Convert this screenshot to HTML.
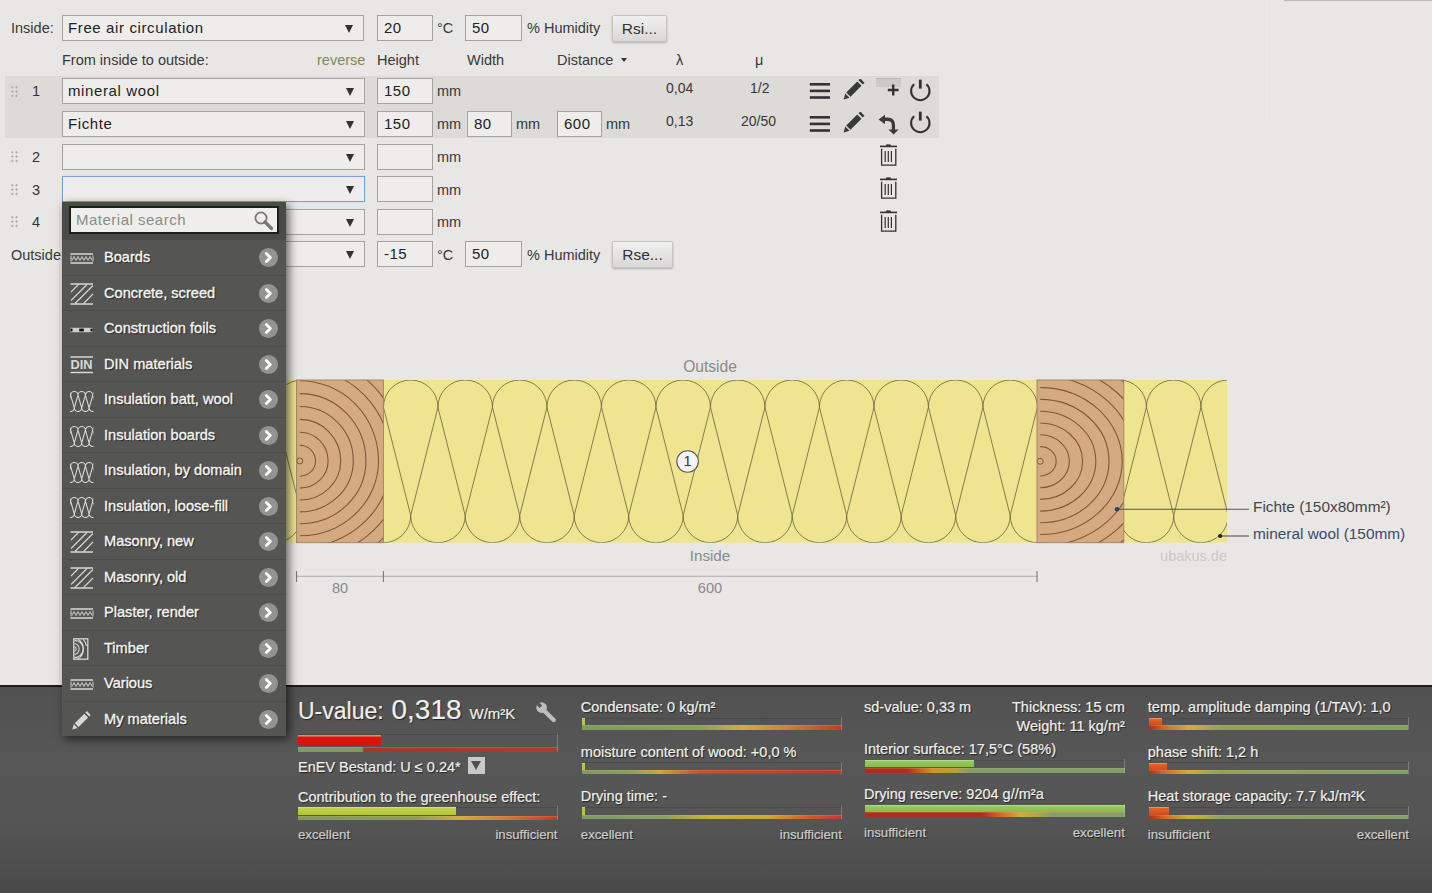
<!DOCTYPE html>
<html><head><meta charset="utf-8">
<style>
*{box-sizing:border-box;margin:0;padding:0}
html,body{width:1432px;height:893px;overflow:hidden}
body{position:relative;background:#e8e7e5;font-family:"Liberation Sans",sans-serif;color:#383838;font-size:14.5px}
.a{position:absolute;white-space:nowrap}
.sel{position:absolute;left:62px;width:303px;height:26px;border:1px solid #a4a4a2;background:#eeedeb;font-size:15px;letter-spacing:0.62px;color:#222;padding-left:5px;line-height:24px}
.sel .ar{position:absolute;right:10px;top:9px;width:0;height:0;border-left:4.5px solid transparent;border-right:4.5px solid transparent;border-top:8px solid #333}
.inp{position:absolute;height:26px;border:1px solid #a4a4a2;background:#eeedeb;font-size:15px;letter-spacing:0.5px;color:#222;padding-left:6px;line-height:24px}
.lbl{position:absolute;white-space:nowrap;line-height:18px}
.band{position:absolute;left:5px;top:76px;width:934px;height:62px;background:#dcdbd8}
.num{position:absolute;left:32px;font-size:14.5px;line-height:18px;color:#333}
.drag{position:absolute;left:10px;width:8.8px;height:13.2px;background-image:radial-gradient(circle,#a8a8a8 0.85px,transparent 1.15px);background-size:4.4px 4.4px}
.btn{position:absolute;height:27px;border:1px solid #c4c4c2;border-radius:2px;background:linear-gradient(#f0f0ee,#d9d8d6);box-shadow:0 1px 2px rgba(0,0,0,0.25);font-size:15.5px;color:#333;text-align:center;line-height:25px}

.pt{position:absolute;white-space:nowrap;line-height:20px;text-shadow:1px 1px 1px #222;-webkit-text-stroke-width:0.2px}
.mit{position:absolute;left:0;width:225px;height:35.5px;border-top:1px solid #4d4d4b}
.mi{position:absolute;left:8px}
.mt{position:absolute;left:42px;top:8px;font-size:14.6px;line-height:18px;color:#f4f4f2;-webkit-text-stroke:0.35px #f4f4f2;text-shadow:1px 1px 1px #1a1a1a;white-space:nowrap}
.mc{position:absolute;left:196.5px;top:8px;width:19px;height:19px;border-radius:50%;background:#939391}
.mc svg{position:absolute;left:0;top:0}
</style></head>
<body>
<!-- diagram -->
<svg class="a" style="left:0;top:0" width="1432" height="685" viewBox="0 0 1432 685">
<defs><clipPath id="insclip"><rect x="180.0" y="380.0" width="1047.0" height="162.70000000000005"/></clipPath></defs>
<rect x="180.0" y="380.0" width="1047.0" height="162.70000000000005" fill="#efe590"/>
<g clip-path="url(#insclip)"><path d="M110.95 407.25 A27.25 27.25 0 0 1 165.45 407.25 M138.20 515.45 A27.25 27.25 0 0 0 192.70 515.45 M110.95 407.25 L83.70 515.45 M110.95 407.25 L138.20 515.45 M165.45 407.25 A27.25 27.25 0 0 1 219.95 407.25 M192.70 515.45 A27.25 27.25 0 0 0 247.20 515.45 M165.45 407.25 L138.20 515.45 M165.45 407.25 L192.70 515.45 M219.95 407.25 A27.25 27.25 0 0 1 274.45 407.25 M247.20 515.45 A27.25 27.25 0 0 0 301.70 515.45 M219.95 407.25 L192.70 515.45 M219.95 407.25 L247.20 515.45 M274.45 407.25 A27.25 27.25 0 0 1 328.95 407.25 M301.70 515.45 A27.25 27.25 0 0 0 356.20 515.45 M274.45 407.25 L247.20 515.45 M274.45 407.25 L301.70 515.45 M328.95 407.25 A27.25 27.25 0 0 1 383.45 407.25 M356.20 515.45 A27.25 27.25 0 0 0 410.70 515.45 M328.95 407.25 L301.70 515.45 M328.95 407.25 L356.20 515.45 M383.45 407.25 A27.25 27.25 0 0 1 437.95 407.25 M410.70 515.45 A27.25 27.25 0 0 0 465.20 515.45 M383.45 407.25 L356.20 515.45 M383.45 407.25 L410.70 515.45 M437.95 407.25 A27.25 27.25 0 0 1 492.45 407.25 M465.20 515.45 A27.25 27.25 0 0 0 519.70 515.45 M437.95 407.25 L410.70 515.45 M437.95 407.25 L465.20 515.45 M492.45 407.25 A27.25 27.25 0 0 1 546.95 407.25 M519.70 515.45 A27.25 27.25 0 0 0 574.20 515.45 M492.45 407.25 L465.20 515.45 M492.45 407.25 L519.70 515.45 M546.95 407.25 A27.25 27.25 0 0 1 601.45 407.25 M574.20 515.45 A27.25 27.25 0 0 0 628.70 515.45 M546.95 407.25 L519.70 515.45 M546.95 407.25 L574.20 515.45 M601.45 407.25 A27.25 27.25 0 0 1 655.95 407.25 M628.70 515.45 A27.25 27.25 0 0 0 683.20 515.45 M601.45 407.25 L574.20 515.45 M601.45 407.25 L628.70 515.45 M655.95 407.25 A27.25 27.25 0 0 1 710.45 407.25 M683.20 515.45 A27.25 27.25 0 0 0 737.70 515.45 M655.95 407.25 L628.70 515.45 M655.95 407.25 L683.20 515.45 M710.45 407.25 A27.25 27.25 0 0 1 764.95 407.25 M737.70 515.45 A27.25 27.25 0 0 0 792.20 515.45 M710.45 407.25 L683.20 515.45 M710.45 407.25 L737.70 515.45 M764.95 407.25 A27.25 27.25 0 0 1 819.45 407.25 M792.20 515.45 A27.25 27.25 0 0 0 846.70 515.45 M764.95 407.25 L737.70 515.45 M764.95 407.25 L792.20 515.45 M819.45 407.25 A27.25 27.25 0 0 1 873.95 407.25 M846.70 515.45 A27.25 27.25 0 0 0 901.20 515.45 M819.45 407.25 L792.20 515.45 M819.45 407.25 L846.70 515.45 M873.95 407.25 A27.25 27.25 0 0 1 928.45 407.25 M901.20 515.45 A27.25 27.25 0 0 0 955.70 515.45 M873.95 407.25 L846.70 515.45 M873.95 407.25 L901.20 515.45 M928.45 407.25 A27.25 27.25 0 0 1 982.95 407.25 M955.70 515.45 A27.25 27.25 0 0 0 1010.20 515.45 M928.45 407.25 L901.20 515.45 M928.45 407.25 L955.70 515.45 M982.95 407.25 A27.25 27.25 0 0 1 1037.45 407.25 M1010.20 515.45 A27.25 27.25 0 0 0 1064.70 515.45 M982.95 407.25 L955.70 515.45 M982.95 407.25 L1010.20 515.45 M1037.45 407.25 A27.25 27.25 0 0 1 1091.95 407.25 M1064.70 515.45 A27.25 27.25 0 0 0 1119.20 515.45 M1037.45 407.25 L1010.20 515.45 M1037.45 407.25 L1064.70 515.45 M1091.95 407.25 A27.25 27.25 0 0 1 1146.45 407.25 M1119.20 515.45 A27.25 27.25 0 0 0 1173.70 515.45 M1091.95 407.25 L1064.70 515.45 M1091.95 407.25 L1119.20 515.45 M1146.45 407.25 A27.25 27.25 0 0 1 1200.95 407.25 M1173.70 515.45 A27.25 27.25 0 0 0 1228.20 515.45 M1146.45 407.25 L1119.20 515.45 M1146.45 407.25 L1173.70 515.45 M1200.95 407.25 A27.25 27.25 0 0 1 1255.45 407.25 M1228.20 515.45 A27.25 27.25 0 0 0 1282.70 515.45 M1200.95 407.25 L1173.70 515.45 M1200.95 407.25 L1228.20 515.45 M1255.45 407.25 A27.25 27.25 0 0 1 1309.95 407.25 M1282.70 515.45 A27.25 27.25 0 0 0 1337.20 515.45 M1255.45 407.25 L1228.20 515.45 M1255.45 407.25 L1282.70 515.45" fill="none" stroke="#6e6a45" stroke-width="0.85"/></g>
<clipPath id="t1"><rect x="296.6" y="380.0" width="86.8" height="162.70000000000005"/></clipPath>
<rect x="296.6" y="380.0" width="86.8" height="162.70000000000005" fill="#d6aa81"/>
<g clip-path="url(#t1)"><path d="M299.80 445.20 A15.70 15.70 0 0 1 315.50 460.90 A15.70 15.30 0 0 1 299.80 476.20 M299.80 432.30 A28.30 28.60 0 0 1 328.10 460.90 A28.30 27.20 0 0 1 299.80 488.10 M299.80 419.40 A40.90 41.50 0 0 1 340.70 460.90 A40.90 39.10 0 0 1 299.80 500.00 M299.80 406.50 A53.50 54.40 0 0 1 353.30 460.90 A53.50 51.00 0 0 1 299.80 511.90 M299.80 393.60 A66.10 67.30 0 0 1 365.90 460.90 A66.10 62.90 0 0 1 299.80 523.80 M299.80 380.70 A78.70 80.20 0 0 1 378.50 460.90 A78.70 74.80 0 0 1 299.80 535.70 M299.80 367.80 A91.30 93.10 0 0 1 391.10 460.90 A91.30 86.70 0 0 1 299.80 547.60 M299.80 354.90 A103.90 106.00 0 0 1 403.70 460.90 A103.90 98.60 0 0 1 299.80 559.50 M299.80 342.00 A116.50 118.90 0 0 1 416.30 460.90 A116.50 110.50 0 0 1 299.80 571.40" fill="none" stroke="#7d5a3a" stroke-width="1.1"/></g>
<circle cx="299.80" cy="460.9" r="3" fill="none" stroke="#7d5a3a" stroke-width="1"/>
<rect x="296.6" y="380.0" width="86.8" height="162.70000000000005" fill="none" stroke="#9b8466" stroke-width="0.9"/>
<clipPath id="t2"><rect x="1037.0" y="380.0" width="86.8" height="162.70000000000005"/></clipPath>
<rect x="1037.0" y="380.0" width="86.8" height="162.70000000000005" fill="#d6aa81"/>
<g clip-path="url(#t2)"><path d="M1040.20 446.60 A16.00 14.70 0 0 1 1056.20 461.30 A16.00 14.70 0 0 1 1040.20 476.00 M1040.20 434.80 A29.20 26.50 0 0 1 1069.40 461.30 A29.20 26.40 0 0 1 1040.20 487.70 M1040.20 423.00 A42.40 38.30 0 0 1 1082.60 461.30 A42.40 38.10 0 0 1 1040.20 499.40 M1040.20 411.20 A55.60 50.10 0 0 1 1095.80 461.30 A55.60 49.80 0 0 1 1040.20 511.10 M1040.20 399.40 A68.80 61.90 0 0 1 1109.00 461.30 A68.80 61.50 0 0 1 1040.20 522.80 M1040.20 387.60 A82.00 73.70 0 0 1 1122.20 461.30 A82.00 73.20 0 0 1 1040.20 534.50 M1040.20 375.80 A95.20 85.50 0 0 1 1135.40 461.30 A95.20 84.90 0 0 1 1040.20 546.20 M1040.20 364.00 A108.40 97.30 0 0 1 1148.60 461.30 A108.40 96.60 0 0 1 1040.20 557.90 M1040.20 352.20 A121.60 109.10 0 0 1 1161.80 461.30 A121.60 108.30 0 0 1 1040.20 569.60" fill="none" stroke="#7d5a3a" stroke-width="1.1"/></g>
<circle cx="1040.20" cy="461.3" r="3" fill="none" stroke="#7d5a3a" stroke-width="1"/>
<rect x="1037.0" y="380.0" width="86.8" height="162.70000000000005" fill="none" stroke="#9b8466" stroke-width="0.9"/>
<circle cx="687.6" cy="461.5" r="10.8" fill="#f4f4f2" stroke="#555" stroke-width="1.1"/>
<text x="687.6" y="466.3" font-family="Liberation Sans" font-size="14.5" fill="#333" text-anchor="middle">1</text>
<text x="710" y="372.4" font-family="Liberation Sans" font-size="15.6" fill="#8a8a8a" text-anchor="middle">Outside</text>
<text x="710" y="561.4" font-family="Liberation Sans" font-size="15.2" fill="#8a8a8a" text-anchor="middle">Inside</text>
<text x="1227" y="560.6" font-family="Liberation Sans" font-size="14.5" fill="#c9c9c8" text-anchor="end">ubakus.de</text>
<path d="M296.5 576.3 H1037" stroke="#ababab" stroke-width="1.1"/>
<path d="M296.5 571 V582 M383.4 571 V582 M1037 571 V582" stroke="#7a7a7a" stroke-width="1.1"/>
<text x="340" y="593" font-family="Liberation Sans" font-size="14.6" fill="#8a8a8a" text-anchor="middle">80</text>
<text x="710" y="593" font-family="Liberation Sans" font-size="14.6" fill="#8a8a8a" text-anchor="middle">600</text>
<path d="M1117 509.2 H1249" stroke="#555" stroke-width="1.1"/>
<circle cx="1117" cy="509.2" r="2.3" fill="#24476a"/>
<path d="M1220.2 536 H1249" stroke="#555" stroke-width="1.1"/>
<circle cx="1220.2" cy="536" r="2.1" fill="#222"/>
<text x="1253" y="511.5" font-family="Liberation Sans" font-size="15.4" fill="#454545">Fichte (150x80mm²)</text>
<text x="1253" y="538.5" font-family="Liberation Sans" font-size="15.4" fill="#3e4a68">mineral wool (150mm)</text>
</svg>
<!-- /diagram -->



<!-- top row -->
<div class="lbl" style="left:11px;top:19px">Inside:</div>
<div class="sel" style="top:15px;width:302px">Free air circulation<span class="ar"></span></div>
<div class="inp" style="left:377px;top:15px;width:56px">20</div>
<div class="lbl" style="left:437px;top:19px">°C</div>
<div class="inp" style="left:465px;top:15px;width:57px">50</div>
<div class="lbl" style="left:527px;top:19px">% Humidity</div>
<div class="btn" style="left:612px;top:15px;width:55px">Rsi...</div>

<div class="lbl" style="left:62px;top:51px">From inside to outside:</div>
<div class="lbl" style="left:317px;top:51px;color:#7d8a5a">reverse</div>
<div class="lbl" style="left:377px;top:51px">Height</div>
<div class="lbl" style="left:467px;top:51px">Width</div>
<div class="lbl" style="left:557px;top:51px">Distance</div>
<div class="a" style="left:621px;top:58px;border-left:3px solid transparent;border-right:3px solid transparent;border-top:4px solid #333"></div>
<div class="lbl" style="left:676px;top:51px">λ</div>
<div class="lbl" style="left:755px;top:51px">μ</div>

<div class="band"></div>
<div id="topline" class="a" style="left:1284px;top:0;width:148px;height:1px;background:#bdbcba"></div>
<div class="a" style="left:1269px;top:0;width:1px;height:125px;background:#e5e4e2"></div>

<!-- rows -->
<div class="drag" style="top:84.8px"></div><div class="num" style="top:82px">1</div>
<div class="sel" style="top:78px">mineral wool<span class="ar"></span></div>
<div class="inp" style="left:377px;top:78px;width:56px">150</div>
<div class="lbl" style="left:437px;top:82px">mm</div>
<div class="lbl" style="left:666px;top:79px;font-size:14px">0,04</div>
<div class="lbl" style="left:750px;top:79px;font-size:14px">1/2</div>

<div class="sel" style="top:111px">Fichte<span class="ar"></span></div>
<div class="inp" style="left:377px;top:111px;width:56px">150</div>
<div class="lbl" style="left:437px;top:115px">mm</div>
<div class="inp" style="left:467px;top:111px;width:45px">80</div>
<div class="lbl" style="left:516px;top:115px">mm</div>
<div class="inp" style="left:557px;top:111px;width:45px">600</div>
<div class="lbl" style="left:606px;top:115px">mm</div>
<div class="lbl" style="left:666px;top:112px;font-size:14px">0,13</div>
<div class="lbl" style="left:741px;top:112px;font-size:14px">20/50</div>

<div class="drag" style="top:150.2px"></div><div class="num" style="top:148px">2</div>
<div class="sel" style="top:144px"><span class="ar"></span></div>
<div class="inp" style="left:377px;top:144px;width:56px"></div>
<div class="lbl" style="left:437px;top:148px">mm</div>

<div class="drag" style="top:182.6px"></div><div class="num" style="top:181px">3</div>
<div class="sel" style="top:176px;border-color:#7b9fdc;box-shadow:0 0 1px #9ab8ea"><span class="ar"></span></div>
<div class="inp" style="left:377px;top:176px;width:56px"></div>
<div class="lbl" style="left:437px;top:181px">mm</div>

<div class="drag" style="top:215px"></div><div class="num" style="top:213px">4</div>
<div class="sel" style="top:209px"><span class="ar"></span></div>
<div class="inp" style="left:377px;top:209px;width:56px"></div>
<div class="lbl" style="left:437px;top:213px">mm</div>

<div class="lbl" style="left:11px;top:246px">Outside:</div>
<div class="sel" style="top:241px"><span class="ar"></span></div>
<div class="inp" style="left:377px;top:241px;width:56px">-15</div>
<div class="lbl" style="left:437px;top:246px">°C</div>
<div class="inp" style="left:465px;top:241px;width:57px">50</div>
<div class="lbl" style="left:527px;top:246px">% Humidity</div>
<div class="btn" style="left:612px;top:241px;width:61px">Rse...</div>

<!-- row icons -->
<svg class="a" style="left:809px;top:82px" width="22" height="18" viewBox="0 0 22 18"><rect x="0.8" y="1" width="20.2" height="2.6" fill="#333"/><rect x="0.8" y="7.6" width="20.2" height="2.6" fill="#333"/><rect x="0.8" y="14.2" width="20.2" height="2.6" fill="#333"/></svg>
<svg class="a" style="left:809px;top:115px" width="22" height="18" viewBox="0 0 22 18"><rect x="0.8" y="1" width="20.2" height="2.6" fill="#333"/><rect x="0.8" y="7.6" width="20.2" height="2.6" fill="#333"/><rect x="0.8" y="14.2" width="20.2" height="2.6" fill="#333"/></svg>
<svg class="a" style="left:842px;top:79px" width="24" height="22" viewBox="0 0 24 22"><path d="M1.6 20.4 L3.28 14.48 L7.52 18.72 Z" fill="#3a3a3a"/><path d="M4.28 13.48 L15.28 2.48 L19.52 6.72 L8.52 17.72 Z" fill="#3a3a3a"/><path d="M16.48 1.28 L18.28 -0.52 L22.52 3.72 L20.72 5.52 Z" fill="#3a3a3a"/></svg>
<svg class="a" style="left:842px;top:112px" width="24" height="22" viewBox="0 0 24 22"><path d="M1.6 20.4 L3.28 14.48 L7.52 18.72 Z" fill="#3a3a3a"/><path d="M4.28 13.48 L15.28 2.48 L19.52 6.72 L8.52 17.72 Z" fill="#3a3a3a"/><path d="M16.48 1.28 L18.28 -0.52 L22.52 3.72 L20.72 5.52 Z" fill="#3a3a3a"/></svg>
<div class="a" style="left:876px;top:78px;width:25px;height:8.5px;background:#cbcac8;border-top:1px solid #bdbcba"></div>
<svg class="a" style="left:886px;top:83px" width="14" height="14" viewBox="0 0 14 14"><rect x="0" y="0" width="14" height="14" fill="#dcdbd8" opacity="0"/><path d="M1.8 7 H12.6 M7.2 1.4 V12.6" stroke="#333" stroke-width="2.4"/></svg>
<svg class="a" style="left:908px;top:78px" width="26" height="26" viewBox="0 0 26 26"><path d="M6.14 6.16 A9.2 9.2 0 1 0 18.46 6.16" fill="none" stroke="#333" stroke-width="2.1"/><rect x="10.9" y="1.6" width="2.8" height="9" fill="#333"/></svg>
<svg class="a" style="left:908px;top:110px" width="26" height="26" viewBox="0 0 26 26"><path d="M6.14 6.16 A9.2 9.2 0 1 0 18.46 6.16" fill="none" stroke="#333" stroke-width="2.1"/><rect x="10.9" y="1.6" width="2.8" height="9" fill="#333"/></svg>
<svg class="a" style="left:876px;top:113px" width="26" height="24" viewBox="0 0 26 24"><path d="M2.6 6.6 L9 1.8 L9 4.6 L11.5 4.6 C16.8 4.6 19 8 19 12 L19 16.5 L22.6 16.5 L17.6 21.6 L12.4 16.5 L15.8 16.5 L15.8 12 C15.8 9.4 14.6 8 11.5 8 L9 8 L9 11.2 Z" fill="#3a3a3a"/></svg>
<svg class="a" style="left:878px;top:144px" width="22" height="24" viewBox="0 0 22 24">
<rect x="2" y="1.6" width="17" height="1.6" fill="#333"/><rect x="8.2" y="0.4" width="4.5" height="1.6" fill="#333"/>
<path d="M3.6 4.8 V21.2 H17.8 V4.8" fill="none" stroke="#333" stroke-width="1.3"/>
<path d="M7.2 7 V18 M10.3 7 V18 M13.4 7 V18" stroke="#333" stroke-width="1.2"/></svg><svg class="a" style="left:878px;top:177px" width="22" height="24" viewBox="0 0 22 24">
<rect x="2" y="1.6" width="17" height="1.6" fill="#333"/><rect x="8.2" y="0.4" width="4.5" height="1.6" fill="#333"/>
<path d="M3.6 4.8 V21.2 H17.8 V4.8" fill="none" stroke="#333" stroke-width="1.3"/>
<path d="M7.2 7 V18 M10.3 7 V18 M13.4 7 V18" stroke="#333" stroke-width="1.2"/></svg><svg class="a" style="left:878px;top:210px" width="22" height="24" viewBox="0 0 22 24">
<rect x="2" y="1.6" width="17" height="1.6" fill="#333"/><rect x="8.2" y="0.4" width="4.5" height="1.6" fill="#333"/>
<path d="M3.6 4.8 V21.2 H17.8 V4.8" fill="none" stroke="#333" stroke-width="1.3"/>
<path d="M7.2 7 V18 M10.3 7 V18 M13.4 7 V18" stroke="#333" stroke-width="1.2"/></svg>



<!-- panel -->
<div id="panel" class="a" style="left:0;top:685px;width:1432px;height:208px;background:linear-gradient(#515151 0%,#575757 35%,#555555 65%,#4a4a4a 100%);border-top:2px solid #1c1c1c"></div>
<div class="pt" style="left:298.0px;top:701.3px;font-size:23px;color:#efefed;">U-value:</div>
<div class="pt" style="left:391.5px;top:699.6px;font-size:28px;color:#efefed;">0,318</div>
<div class="pt" style="left:469.5px;top:704.1px;font-size:15px;color:#efefed;">W/m²K</div>
<svg class="a" style="left:535px;top:701px" width="22" height="22" viewBox="0 0 22 22"><path d="M9 9.5 L18.6 19" stroke="#bdbdbb" stroke-width="4.4" stroke-linecap="round"/><circle cx="6.6" cy="6.6" r="5.3" fill="#bdbdbb"/><path d="M7.1 4.6 L3.6 1.1 L1.1 3.6 L4.6 7.1 Z" fill="#575757"/></svg>
<div class="a" style="left:298px;top:734.1px;width:259.5px;height:1px;background:rgba(0,0,0,0.12);"></div>
<div class="a" style="left:298px;top:734.6px;width:83px;height:11px;background:linear-gradient(#e4584a 0,#e4584a 1.5px,#d8150a 2.5px,#d8150a);box-shadow:inset 0 1px 0 rgba(255,255,255,0.25)"></div>
<div class="a" style="left:298px;top:747.2px;width:259.5px;height:4.4px;background:linear-gradient(90deg,#7d9a6a 0%,#7d9a6a 24.5%,#a3392a 25.5%,#b03a2b 100%);box-shadow:inset 0 1px 0 rgba(255,160,120,0.25)"></div>
<div class="a" style="left:556.5px;top:733.6px;width:1px;height:18.00000000000002px;background:rgba(200,200,200,0.35);"></div>
<div class="pt" style="left:298.0px;top:756.7px;font-size:14.5px;color:#efefed;">EnEV Bestand: U ≤ 0.24*</div>
<div class="a" style="left:467.6px;top:756.6px;width:17px;height:17px;background:#c9c9c7;"></div>
<div class="a" style="left:470.8px;top:761px;border-left:5.3px solid transparent;border-right:5.3px solid transparent;border-top:9px solid #505050"></div>
<div class="pt" style="left:298.0px;top:786.8px;font-size:14.5px;color:#efefed;">Contribution to the greenhouse effect:</div>
<div class="a" style="left:298px;top:806.8px;width:259.5px;height:1px;background:rgba(0,0,0,0.12);"></div>
<div class="a" style="left:298px;top:807.3px;width:158px;height:8px;background:linear-gradient(#c5d34a,#b4c533);box-shadow:inset 0 1px 0 rgba(255,255,255,0.25)"></div>
<div class="a" style="left:298px;top:815.6px;width:259.5px;height:4.4px;background:linear-gradient(90deg,#7c9c64 0%,#86a05e 45%,#c9b13a 62%,#cf7a35 80%,#c0392b 100%);box-shadow:inset 0 1px 0 rgba(255,160,120,0.25)"></div>
<div class="a" style="left:556.5px;top:806.3px;width:1px;height:13.700000000000069px;background:rgba(200,200,200,0.35);"></div>
<div class="pt" style="left:298.0px;top:825.1px;font-size:13.2px;color:#cdcdcb;">excellent</div>
<div class="pt" style="right:874.5px;top:825.1px;font-size:13.2px;color:#cdcdcb;">insufficient</div>
<div class="pt" style="left:580.8px;top:696.6px;font-size:14.5px;color:#efefed;">Condensate: 0 kg/m²</div>
<div class="a" style="left:581.5px;top:717.5px;width:260.0px;height:1px;background:rgba(0,0,0,0.12);"></div>
<div class="a" style="left:581.5px;top:718px;width:3.5px;height:7.3px;background:#b9c245;box-shadow:inset 0 1px 0 rgba(255,255,255,0.25)"></div>
<div class="a" style="left:581.5px;top:725.3px;width:260.0px;height:4.4px;background:linear-gradient(90deg,#7c9c64 0%,#86a05e 45%,#c9b13a 62%,#cf7a35 80%,#c0392b 100%);box-shadow:inset 0 1px 0 rgba(255,160,120,0.25)"></div>
<div class="a" style="left:840.5px;top:717px;width:1px;height:12.699999999999955px;background:rgba(200,200,200,0.35);"></div>
<div class="pt" style="left:580.8px;top:741.6px;font-size:14.5px;color:#efefed;">moisture content of wood: +0,0 %</div>
<div class="a" style="left:581.5px;top:762.0px;width:260.0px;height:1px;background:rgba(0,0,0,0.12);"></div>
<div class="a" style="left:581.5px;top:762.5px;width:3.5px;height:7.3px;background:#b9c245;box-shadow:inset 0 1px 0 rgba(255,255,255,0.25)"></div>
<div class="a" style="left:581.5px;top:769.9px;width:260.0px;height:4.4px;background:linear-gradient(90deg,#7c9c64 0%,#86a05e 18%,#c9a93a 30%,#c05030 45%,#b8352a 100%);box-shadow:inset 0 1px 0 rgba(255,160,120,0.25)"></div>
<div class="a" style="left:840.5px;top:761.5px;width:1px;height:12.799999999999978px;background:rgba(200,200,200,0.35);"></div>
<div class="pt" style="left:580.8px;top:785.6px;font-size:14.5px;color:#efefed;">Drying time: -</div>
<div class="a" style="left:581.5px;top:806.9px;width:260.0px;height:1px;background:rgba(0,0,0,0.12);"></div>
<div class="a" style="left:581.5px;top:807.4px;width:3.5px;height:7.3px;background:#b9c245;box-shadow:inset 0 1px 0 rgba(255,255,255,0.25)"></div>
<div class="a" style="left:581.5px;top:814.8px;width:260.0px;height:4.4px;background:linear-gradient(90deg,#7c9c64 0%,#86a05e 30%,#cdb03c 50%,#cfa33a 72%,#c85a30 88%,#c0392b 100%);box-shadow:inset 0 1px 0 rgba(255,160,120,0.25)"></div>
<div class="a" style="left:840.5px;top:806.4px;width:1px;height:12.799999999999978px;background:rgba(200,200,200,0.35);"></div>
<div class="pt" style="left:580.8px;top:825.1px;font-size:13.2px;color:#cdcdcb;">excellent</div>
<div class="pt" style="right:590.2px;top:825.1px;font-size:13.2px;color:#cdcdcb;">insufficient</div>
<div class="pt" style="left:864.0px;top:696.6px;font-size:14.5px;color:#efefed;">sd-value: 0,33 m</div>
<div class="pt" style="right:307.2px;top:696.6px;font-size:14.5px;color:#efefed;">Thickness: 15 cm</div>
<div class="pt" style="right:307.2px;top:716.0px;font-size:14.5px;color:#efefed;">Weight: 11 kg/m²</div>
<div class="pt" style="left:864.0px;top:738.9px;font-size:14.5px;color:#efefed;">Interior surface: 17,5°C (58%)</div>
<div class="a" style="left:864.7px;top:759.5px;width:260.29999999999995px;height:1px;background:rgba(0,0,0,0.12);"></div>
<div class="a" style="left:864.7px;top:760px;width:109.3px;height:7.3px;background:linear-gradient(#9ccd62,#85bb4e);box-shadow:inset 0 1px 0 rgba(255,255,255,0.25)"></div>
<div class="a" style="left:864.7px;top:768.2px;width:260.29999999999995px;height:4.4px;background:linear-gradient(90deg,#a8301f 0%,#a8301f 16%,#c8962e 26%,#b5a040 35%,#7fa06a 40%,#7fa06a 100%);box-shadow:inset 0 1px 0 rgba(255,160,120,0.25)"></div>
<div class="a" style="left:1124px;top:759px;width:1px;height:13.600000000000046px;background:rgba(200,200,200,0.35);"></div>
<div class="pt" style="left:864.0px;top:783.8px;font-size:14.5px;color:#efefed;">Drying reserve: 9204 g//m²a</div>
<div class="a" style="left:864.7px;top:804.7px;width:260.29999999999995px;height:1px;background:rgba(0,0,0,0.12);"></div>
<div class="a" style="left:864.7px;top:805.2px;width:260.3px;height:6.6px;background:linear-gradient(#9ccd62,#85bb4e);box-shadow:inset 0 1px 0 rgba(255,255,255,0.25)"></div>
<div class="a" style="left:864.7px;top:812.3px;width:260.29999999999995px;height:4.4px;background:linear-gradient(90deg,#a8301f 0%,#a8301f 45%,#cf6a2a 52%,#c8b03a 60%,#86a060 72%,#7fa06a 100%);box-shadow:inset 0 1px 0 rgba(255,160,120,0.25)"></div>
<div class="a" style="left:1124px;top:804.2px;width:1px;height:12.49999999999991px;background:rgba(200,200,200,0.35);"></div>
<div class="pt" style="left:864.0px;top:823.0px;font-size:13.2px;color:#cdcdcb;">insufficient</div>
<div class="pt" style="right:307.2px;top:823.0px;font-size:13.2px;color:#cdcdcb;">excellent</div>
<div class="pt" style="left:1147.8px;top:696.6px;font-size:14.5px;color:#efefed;">temp. amplitude damping (1/TAV): 1,0</div>
<div class="a" style="left:1148.8px;top:717.5px;width:259.70000000000005px;height:1px;background:rgba(0,0,0,0.12);"></div>
<div class="a" style="left:1148.8px;top:718px;width:13.7px;height:7.3px;background:linear-gradient(#e56a2c,#d34a18);box-shadow:inset 0 1px 0 rgba(255,255,255,0.25)"></div>
<div class="a" style="left:1148.8px;top:725.3px;width:259.70000000000005px;height:4.4px;background:linear-gradient(90deg,#a8301f 0%,#cd6a2e 6%,#c8b03a 15%,#90a25c 28%,#7fa06a 100%);box-shadow:inset 0 1px 0 rgba(255,160,120,0.25)"></div>
<div class="a" style="left:1407.5px;top:717px;width:1px;height:12.699999999999955px;background:rgba(200,200,200,0.35);"></div>
<div class="pt" style="left:1147.8px;top:741.6px;font-size:14.5px;color:#efefed;">phase shift: 1,2 h</div>
<div class="a" style="left:1148.8px;top:762.0px;width:259.70000000000005px;height:1px;background:rgba(0,0,0,0.12);"></div>
<div class="a" style="left:1148.8px;top:762.5px;width:18.2px;height:7.3px;background:linear-gradient(#e56a2c,#d34a18);box-shadow:inset 0 1px 0 rgba(255,255,255,0.25)"></div>
<div class="a" style="left:1148.8px;top:769.9px;width:259.70000000000005px;height:4.4px;background:linear-gradient(90deg,#a8301f 0%,#cd6a2e 6%,#c8b03a 15%,#90a25c 28%,#7fa06a 100%);box-shadow:inset 0 1px 0 rgba(255,160,120,0.25)"></div>
<div class="a" style="left:1407.5px;top:761.5px;width:1px;height:12.799999999999978px;background:rgba(200,200,200,0.35);"></div>
<div class="pt" style="left:1147.8px;top:785.6px;font-size:14.5px;color:#efefed;">Heat storage capacity: 7.7 kJ/m²K</div>
<div class="a" style="left:1148.8px;top:806.9px;width:259.70000000000005px;height:1px;background:rgba(0,0,0,0.12);"></div>
<div class="a" style="left:1148.8px;top:807.4px;width:20.5px;height:7.3px;background:linear-gradient(#e56a2c,#d34a18);box-shadow:inset 0 1px 0 rgba(255,255,255,0.25)"></div>
<div class="a" style="left:1148.8px;top:814.8px;width:259.70000000000005px;height:4.4px;background:linear-gradient(90deg,#a8301f 0%,#cd6a2e 6%,#c8b03a 15%,#90a25c 28%,#7fa06a 100%);box-shadow:inset 0 1px 0 rgba(255,160,120,0.25)"></div>
<div class="a" style="left:1407.5px;top:806.4px;width:1px;height:12.799999999999978px;background:rgba(200,200,200,0.35);"></div>
<div class="pt" style="left:1147.8px;top:825.1px;font-size:13.2px;color:#cdcdcb;">insufficient</div>
<div class="pt" style="right:23.1px;top:825.1px;font-size:13.2px;color:#cdcdcb;">excellent</div>
<!-- /panel -->
<div id="menu" class="a" style="left:62px;top:202px;width:224px;height:534px;background:#555553;box-shadow:3px 3px 9px rgba(0,0,0,0.6);z-index:10;overflow:hidden">
<div class="a" style="left:0;top:0;width:225px;height:37px;background:#4a4a48"></div>
<div class="a" style="left:7px;top:4px;width:210px;height:28px;border:2px solid #1e1e1e;background:#efeeec;font-size:15px;letter-spacing:0.5px;color:#8a8a88;padding-left:5px;line-height:24px">Material search</div>
<svg class="a" style="left:191px;top:8px" width="22" height="22" viewBox="0 0 22 22"><circle cx="8" cy="8" r="5.6" fill="none" stroke="#777" stroke-width="1.8"/><path d="M12 12 L18.5 18.5" stroke="#777" stroke-width="3.2" stroke-linecap="round"/></svg>
<div class="mit" style="top:37.0px"><svg class="mi" style="top:13px" width="24" height="11" viewBox="0 0 24 11"><path d="M0.5 1 H23 M0.5 10 H23" stroke="#d8d8d6" stroke-width="1.5"/><path d="M1 2.5 V8.5 M23 2.5 V8.5" stroke="#d8d8d6" stroke-width="0.9"/><path d="M2 7.6 L4 3.4 L6 7.6 L8 3.4 L10 7.6 L12 3.4 L14 7.6 L16 3.4 L18 7.6 L20 3.4 L22 7.6" fill="none" stroke="#d8d8d6" stroke-width="0.9" opacity="0.85"/><path d="M1 5.5 H23" stroke="#d8d8d6" stroke-width="0.8" stroke-dasharray="1.2 1" opacity="0.7"/></svg><span class="mt">Boards</span><span class="mc"><svg width="19" height="19" viewBox="0 0 19 19"><path d="M7.3 5.4 L11.4 9.5 L7.3 13.6" fill="none" stroke="#fff" stroke-width="2.8" stroke-linecap="round" stroke-linejoin="round"/></svg></span></div>
<div class="mit" style="top:72.5px"><svg class="mi" style="top:7px" width="24" height="22" viewBox="0 0 24 22"><path d="M0.5 1 H23 M0.5 21 H23" stroke="#d8d8d6" stroke-width="1.4"/><path d="M1 9 L8.5 1.5 M1 17.5 L17 1.5 M5 20.5 L23 2.5 M13.5 20.5 L23 11" stroke="#d8d8d6" stroke-width="1.1"/></svg><span class="mt">Concrete, screed</span><span class="mc"><svg width="19" height="19" viewBox="0 0 19 19"><path d="M7.3 5.4 L11.4 9.5 L7.3 13.6" fill="none" stroke="#fff" stroke-width="2.8" stroke-linecap="round" stroke-linejoin="round"/></svg></span></div>
<div class="mit" style="top:108.0px"><svg class="mi" style="top:15.5px" width="24" height="6" viewBox="0 0 24 6"><rect x="0.5" y="0.8" width="22" height="4.4" fill="#cfcfcd"/><rect x="0.5" y="1.6" width="2" height="2.8" fill="#111"/><rect x="9.2" y="1.6" width="4.6" height="2.8" fill="#111"/><rect x="20.5" y="1.6" width="2" height="2.8" fill="#111"/></svg><span class="mt">Construction foils</span><span class="mc"><svg width="19" height="19" viewBox="0 0 19 19"><path d="M7.3 5.4 L11.4 9.5 L7.3 13.6" fill="none" stroke="#fff" stroke-width="2.8" stroke-linecap="round" stroke-linejoin="round"/></svg></span></div>
<div class="mit" style="top:143.5px"><svg class="mi" style="top:9.5px" width="24" height="18" viewBox="0 0 24 18"><path d="M0.5 1 H23 M0.5 16.6 H23" stroke="#d8d8d6" stroke-width="1.5"/><text x="0.6" y="13.3" font-family="Liberation Sans" font-weight="bold" font-size="12" fill="#d8d8d6" textLength="22" lengthAdjust="spacingAndGlyphs">DIN</text></svg><span class="mt">DIN materials</span><span class="mc"><svg width="19" height="19" viewBox="0 0 19 19"><path d="M7.3 5.4 L11.4 9.5 L7.3 13.6" fill="none" stroke="#fff" stroke-width="2.8" stroke-linecap="round" stroke-linejoin="round"/></svg></span></div>
<div class="mit" style="top:179.0px"><svg class="mi" style="top:8.5px" width="24" height="21" viewBox="0 0 24 21"><defs><clipPath id="wc"><rect x="0" y="0" width="23.4" height="21"/></clipPath></defs><g clip-path="url(#wc)"><path d="M-6.80 4.2 A3.70 3.70 0 0 1 0.60 4.2 M-10.50 16.8 A3.70 3.70 0 0 0 -3.10 16.8 M0.60 4.2 L-3.10 16.8 M0.60 4.2 L4.30 16.8 M0.60 4.2 A3.70 3.70 0 0 1 8.00 4.2 M-3.10 16.8 A3.70 3.70 0 0 0 4.30 16.8 M8.00 4.2 L4.30 16.8 M8.00 4.2 L11.70 16.8 M8.00 4.2 A3.70 3.70 0 0 1 15.40 4.2 M4.30 16.8 A3.70 3.70 0 0 0 11.70 16.8 M15.40 4.2 L11.70 16.8 M15.40 4.2 L19.10 16.8 M15.40 4.2 A3.70 3.70 0 0 1 22.80 4.2 M11.70 16.8 A3.70 3.70 0 0 0 19.10 16.8 M22.80 4.2 L19.10 16.8 M22.80 4.2 L26.50 16.8 M22.80 4.2 A3.70 3.70 0 0 1 30.20 4.2 M19.10 16.8 A3.70 3.70 0 0 0 26.50 16.8 M30.20 4.2 L26.50 16.8 M30.20 4.2 L33.90 16.8" fill="none" stroke="#d8d8d6" stroke-width="1.1"/></g></svg><span class="mt">Insulation batt, wool</span><span class="mc"><svg width="19" height="19" viewBox="0 0 19 19"><path d="M7.3 5.4 L11.4 9.5 L7.3 13.6" fill="none" stroke="#fff" stroke-width="2.8" stroke-linecap="round" stroke-linejoin="round"/></svg></span></div>
<div class="mit" style="top:214.5px"><svg class="mi" style="top:8.5px" width="24" height="21" viewBox="0 0 24 21"><defs><clipPath id="wc"><rect x="0" y="0" width="23.4" height="21"/></clipPath></defs><g clip-path="url(#wc)"><path d="M-6.80 4.2 A3.70 3.70 0 0 1 0.60 4.2 M-10.50 16.8 A3.70 3.70 0 0 0 -3.10 16.8 M0.60 4.2 L-3.10 16.8 M0.60 4.2 L4.30 16.8 M0.60 4.2 A3.70 3.70 0 0 1 8.00 4.2 M-3.10 16.8 A3.70 3.70 0 0 0 4.30 16.8 M8.00 4.2 L4.30 16.8 M8.00 4.2 L11.70 16.8 M8.00 4.2 A3.70 3.70 0 0 1 15.40 4.2 M4.30 16.8 A3.70 3.70 0 0 0 11.70 16.8 M15.40 4.2 L11.70 16.8 M15.40 4.2 L19.10 16.8 M15.40 4.2 A3.70 3.70 0 0 1 22.80 4.2 M11.70 16.8 A3.70 3.70 0 0 0 19.10 16.8 M22.80 4.2 L19.10 16.8 M22.80 4.2 L26.50 16.8 M22.80 4.2 A3.70 3.70 0 0 1 30.20 4.2 M19.10 16.8 A3.70 3.70 0 0 0 26.50 16.8 M30.20 4.2 L26.50 16.8 M30.20 4.2 L33.90 16.8" fill="none" stroke="#d8d8d6" stroke-width="1.1"/></g></svg><span class="mt">Insulation boards</span><span class="mc"><svg width="19" height="19" viewBox="0 0 19 19"><path d="M7.3 5.4 L11.4 9.5 L7.3 13.6" fill="none" stroke="#fff" stroke-width="2.8" stroke-linecap="round" stroke-linejoin="round"/></svg></span></div>
<div class="mit" style="top:250.0px"><svg class="mi" style="top:8.5px" width="24" height="21" viewBox="0 0 24 21"><defs><clipPath id="wc"><rect x="0" y="0" width="23.4" height="21"/></clipPath></defs><g clip-path="url(#wc)"><path d="M-6.80 4.2 A3.70 3.70 0 0 1 0.60 4.2 M-10.50 16.8 A3.70 3.70 0 0 0 -3.10 16.8 M0.60 4.2 L-3.10 16.8 M0.60 4.2 L4.30 16.8 M0.60 4.2 A3.70 3.70 0 0 1 8.00 4.2 M-3.10 16.8 A3.70 3.70 0 0 0 4.30 16.8 M8.00 4.2 L4.30 16.8 M8.00 4.2 L11.70 16.8 M8.00 4.2 A3.70 3.70 0 0 1 15.40 4.2 M4.30 16.8 A3.70 3.70 0 0 0 11.70 16.8 M15.40 4.2 L11.70 16.8 M15.40 4.2 L19.10 16.8 M15.40 4.2 A3.70 3.70 0 0 1 22.80 4.2 M11.70 16.8 A3.70 3.70 0 0 0 19.10 16.8 M22.80 4.2 L19.10 16.8 M22.80 4.2 L26.50 16.8 M22.80 4.2 A3.70 3.70 0 0 1 30.20 4.2 M19.10 16.8 A3.70 3.70 0 0 0 26.50 16.8 M30.20 4.2 L26.50 16.8 M30.20 4.2 L33.90 16.8" fill="none" stroke="#d8d8d6" stroke-width="1.1"/></g></svg><span class="mt">Insulation, by domain</span><span class="mc"><svg width="19" height="19" viewBox="0 0 19 19"><path d="M7.3 5.4 L11.4 9.5 L7.3 13.6" fill="none" stroke="#fff" stroke-width="2.8" stroke-linecap="round" stroke-linejoin="round"/></svg></span></div>
<div class="mit" style="top:285.5px"><svg class="mi" style="top:8.5px" width="24" height="21" viewBox="0 0 24 21"><defs><clipPath id="wc"><rect x="0" y="0" width="23.4" height="21"/></clipPath></defs><g clip-path="url(#wc)"><path d="M-6.80 4.2 A3.70 3.70 0 0 1 0.60 4.2 M-10.50 16.8 A3.70 3.70 0 0 0 -3.10 16.8 M0.60 4.2 L-3.10 16.8 M0.60 4.2 L4.30 16.8 M0.60 4.2 A3.70 3.70 0 0 1 8.00 4.2 M-3.10 16.8 A3.70 3.70 0 0 0 4.30 16.8 M8.00 4.2 L4.30 16.8 M8.00 4.2 L11.70 16.8 M8.00 4.2 A3.70 3.70 0 0 1 15.40 4.2 M4.30 16.8 A3.70 3.70 0 0 0 11.70 16.8 M15.40 4.2 L11.70 16.8 M15.40 4.2 L19.10 16.8 M15.40 4.2 A3.70 3.70 0 0 1 22.80 4.2 M11.70 16.8 A3.70 3.70 0 0 0 19.10 16.8 M22.80 4.2 L19.10 16.8 M22.80 4.2 L26.50 16.8 M22.80 4.2 A3.70 3.70 0 0 1 30.20 4.2 M19.10 16.8 A3.70 3.70 0 0 0 26.50 16.8 M30.20 4.2 L26.50 16.8 M30.20 4.2 L33.90 16.8" fill="none" stroke="#d8d8d6" stroke-width="1.1"/></g></svg><span class="mt">Insulation, loose-fill</span><span class="mc"><svg width="19" height="19" viewBox="0 0 19 19"><path d="M7.3 5.4 L11.4 9.5 L7.3 13.6" fill="none" stroke="#fff" stroke-width="2.8" stroke-linecap="round" stroke-linejoin="round"/></svg></span></div>
<div class="mit" style="top:321.0px"><svg class="mi" style="top:7px" width="24" height="22" viewBox="0 0 24 22"><path d="M0.5 1 H23 M0.5 21 H23" stroke="#d8d8d6" stroke-width="1.4"/><path d="M1 9 L8.5 1.5 M1 17.5 L17 1.5 M5 20.5 L23 2.5 M13.5 20.5 L23 11" stroke="#d8d8d6" stroke-width="1.1"/></svg><span class="mt">Masonry, new</span><span class="mc"><svg width="19" height="19" viewBox="0 0 19 19"><path d="M7.3 5.4 L11.4 9.5 L7.3 13.6" fill="none" stroke="#fff" stroke-width="2.8" stroke-linecap="round" stroke-linejoin="round"/></svg></span></div>
<div class="mit" style="top:356.5px"><svg class="mi" style="top:7px" width="24" height="22" viewBox="0 0 24 22"><path d="M0.5 1 H23 M0.5 21 H23" stroke="#d8d8d6" stroke-width="1.4"/><path d="M1 9 L8.5 1.5 M1 17.5 L17 1.5 M5 20.5 L23 2.5 M13.5 20.5 L23 11" stroke="#d8d8d6" stroke-width="1.1"/></svg><span class="mt">Masonry, old</span><span class="mc"><svg width="19" height="19" viewBox="0 0 19 19"><path d="M7.3 5.4 L11.4 9.5 L7.3 13.6" fill="none" stroke="#fff" stroke-width="2.8" stroke-linecap="round" stroke-linejoin="round"/></svg></span></div>
<div class="mit" style="top:392.0px"><svg class="mi" style="top:13px" width="24" height="11" viewBox="0 0 24 11"><path d="M0.5 1 H23 M0.5 10 H23" stroke="#d8d8d6" stroke-width="1.5"/><path d="M1 2.5 V8.5 M23 2.5 V8.5" stroke="#d8d8d6" stroke-width="0.9"/><path d="M2 7.6 L4 3.4 L6 7.6 L8 3.4 L10 7.6 L12 3.4 L14 7.6 L16 3.4 L18 7.6 L20 3.4 L22 7.6" fill="none" stroke="#d8d8d6" stroke-width="0.9" opacity="0.85"/><path d="M1 5.5 H23" stroke="#d8d8d6" stroke-width="0.8" stroke-dasharray="1.2 1" opacity="0.7"/></svg><span class="mt">Plaster, render</span><span class="mc"><svg width="19" height="19" viewBox="0 0 19 19"><path d="M7.3 5.4 L11.4 9.5 L7.3 13.6" fill="none" stroke="#fff" stroke-width="2.8" stroke-linecap="round" stroke-linejoin="round"/></svg></span></div>
<div class="mit" style="top:427.5px"><svg class="mi" style="top:7px;left:11px" width="16" height="22" viewBox="0 0 16 22"><rect x="0.8" y="0.8" width="14" height="20.4" fill="none" stroke="#d8d8d6" stroke-width="1.3"/><path d="M1.5 8.6 A2.6 2.6 0 0 1 1.5 13.4 M1.5 5.5 A5.6 5.6 0 0 1 1.5 16.5 M1.5 2.4 A8.6 8.6 0 0 1 1.5 19.6 M5 1.2 A11.5 11.5 0 0 1 5 20.8 M10 1.2 A13 13 0 0 1 13.5 8" fill="none" stroke="#d8d8d6" stroke-width="1.1"/></svg><span class="mt">Timber</span><span class="mc"><svg width="19" height="19" viewBox="0 0 19 19"><path d="M7.3 5.4 L11.4 9.5 L7.3 13.6" fill="none" stroke="#fff" stroke-width="2.8" stroke-linecap="round" stroke-linejoin="round"/></svg></span></div>
<div class="mit" style="top:463.0px"><svg class="mi" style="top:13px" width="24" height="11" viewBox="0 0 24 11"><path d="M0.5 1 H23 M0.5 10 H23" stroke="#d8d8d6" stroke-width="1.5"/><path d="M1 2.5 V8.5 M23 2.5 V8.5" stroke="#d8d8d6" stroke-width="0.9"/><path d="M2 7.6 L4 3.4 L6 7.6 L8 3.4 L10 7.6 L12 3.4 L14 7.6 L16 3.4 L18 7.6 L20 3.4 L22 7.6" fill="none" stroke="#d8d8d6" stroke-width="0.9" opacity="0.85"/><path d="M1 5.5 H23" stroke="#d8d8d6" stroke-width="0.8" stroke-dasharray="1.2 1" opacity="0.7"/></svg><span class="mt">Various</span><span class="mc"><svg width="19" height="19" viewBox="0 0 19 19"><path d="M7.3 5.4 L11.4 9.5 L7.3 13.6" fill="none" stroke="#fff" stroke-width="2.8" stroke-linecap="round" stroke-linejoin="round"/></svg></span></div>
<div class="mit" style="top:498.5px"><svg class="mi" style="top:9px;left:10px" width="20" height="19" viewBox="0 0 20 19"><path d="M0.3 18.4 L1.8 13.2 L5.6 17 Z" fill="#d8d8d6"/><path d="M2.8 12.2 L12.3 2.7 L16.1 6.5 L6.6 16 Z" fill="#d8d8d6"/><path d="M13.4 1.6 L14.9 0.1 L18.7 3.9 L17.2 5.4 Z" fill="#d8d8d6"/></svg><span class="mt">My materials</span><span class="mc"><svg width="19" height="19" viewBox="0 0 19 19"><path d="M7.3 5.4 L11.4 9.5 L7.3 13.6" fill="none" stroke="#fff" stroke-width="2.8" stroke-linecap="round" stroke-linejoin="round"/></svg></span></div>
</div>
</body></html>
